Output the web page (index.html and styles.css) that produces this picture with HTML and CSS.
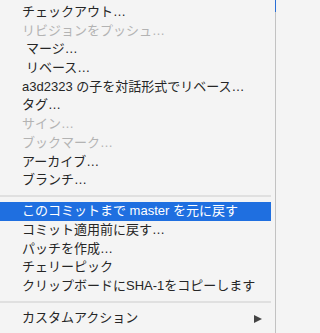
FILE: index.html
```html
<!DOCTYPE html>
<html lang="ja">
<head>
<meta charset="utf-8">
<link rel="stylesheet" href="styles.css">
</head>
<body>
<div class="frame">
  <div class="menu">
    <div class="item">チェックアウト…</div>
    <div class="item disabled">リビジョンをプッシュ…</div>
    <div class="item indent">マージ…</div>
    <div class="item indent">リベース…</div>
    <div class="item">a3d2323 の子を対話形式でリベース…</div>
    <div class="item">タグ…</div>
    <div class="item disabled">サイン…</div>
    <div class="item disabled">ブックマーク…</div>
    <div class="item">アーカイブ…</div>
    <div class="item">ブランチ…</div>
    <div class="sep sep-a"></div>
    <div class="item active">このコミットまで master を元に戻す</div>
    <div class="item">コミット適用前に戻す…</div>
    <div class="item">パッチを作成…</div>
    <div class="item">チェリーピック</div>
    <div class="item">クリップボードにSHA-1をコピーします</div>
    <div class="sep sep-b"></div>
    <div class="item submenu"><span>カスタムアクション</span><span class="arrow"></span></div>
  </div>
  <div class="edge"></div>
</div>
</body>
</html>
```
FILE: styles.css
```css
html, body {
  margin: 0;
  padding: 0;
}
body {
  width: 276px;
  height: 333px;
  background: #f4f4f4;
  overflow: hidden;
  font-family: "Liberation Sans", "Noto Sans CJK JP", sans-serif;
  font-size: 13px;
  color: #262626;
}
.frame {
  display: flex;
  height: 333px;
}
.menu {
  flex: 1;
  display: flex;
  flex-direction: column;
  padding-top: 3px;
  margin-right: 4px;
}
.edge {
  width: 1px;
  background: linear-gradient(#2a6fd6 0 12px, #c2c2c2 12px);
}
.item {
  height: 18.7px;
  line-height: 18.7px;
  padding-left: 22px;
  white-space: nowrap;
}
.item.indent {
  padding-left: 26px;
}
.item.disabled {
  color: #b3b3b3;
}
.item.active {
  background: #1f6fe0;
  color: #ffffff;
}
.sep {
  display: flex;
  align-items: center;
}
.sep::before {
  content: "";
  flex: 1;
  height: 2px;
  background: #e0e0e0;
}
.sep-a {
  height: 12.3px;
}
.sep-b {
  height: 13.6px;
}
.submenu {
  display: flex;
  align-items: center;
  justify-content: space-between;
  padding-right: 9px;
}
.arrow {
  width: 0;
  height: 0;
  border-left: 8px solid #444444;
  border-top: 4.5px solid transparent;
  border-bottom: 4.5px solid transparent;
}
```
